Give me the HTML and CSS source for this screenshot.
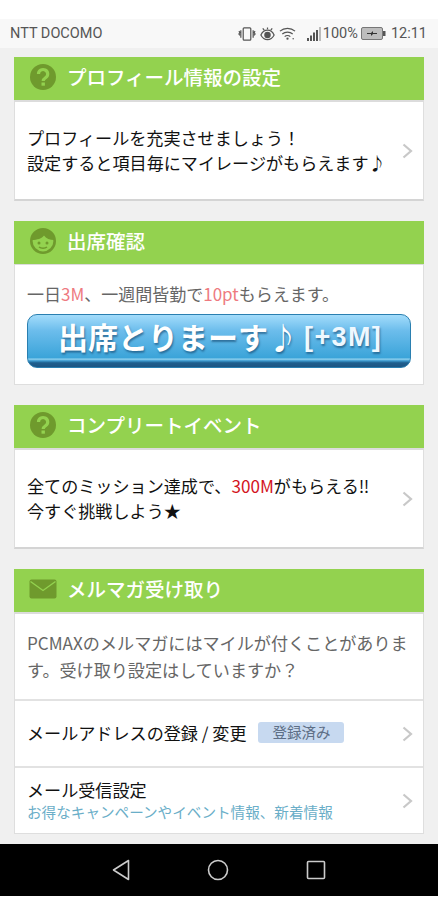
FILE: index.html
```html
<!DOCTYPE html>
<html lang="ja">
<head>
  <meta charset="UTF-8" />
  <meta name="viewport" content="width=device-width, initial-scale=1.0"/>
  <title>マイページ</title>
  <link rel="stylesheet" href="styles.css">
</head>
<body>
  <div class="screen">
    <div class="status-bar">
      <span class="carrier">NTT DOCOMO</span>
      <div class="status-right">
        <svg class="st-icon" width="18" height="16" viewBox="0 0 19 16" fill="none" stroke="#555" stroke-width="1.3">
          <rect x="5.500" y="1.500" width="8" height="13" rx="1"/>
          <path d="M3 4v8M1 5l1 1.500-1 1.500 1 1.500M16 4v8M18 5l-1 1.500 1 1.500-1 1.500"/>
        </svg>
        <svg class="st-icon" width="17" height="16" viewBox="0 0 18 16" fill="none" stroke="#555" stroke-width="1.3">
          <path d="M2 9c2-4 4-5 7-5s5 1 7 5c-2 4-4 5-7 5s-5-1-7-5z"/>
          <circle cx="9" cy="9" r="2.800" fill="#555"/>
          <path d="M9 1v2M4 2l1.500 2M14 2l-1.500 2"/>
        </svg>
        <svg class="st-icon" width="17" height="15" viewBox="0 0 18 15" fill="none" stroke="#555" stroke-width="1.3">
          <path d="M1 5c4.500-4 11.500-4 16 0M3.500 8c3-2.600 8-2.600 11 0M6 10.800c1.600-1.300 4.400-1.300 6 0"/>
          <circle cx="9" cy="13" r="1.200" fill="#555" stroke="none"/>
          <circle cx="15" cy="13" r="0.800" fill="#555" stroke="none"/>
        </svg>
        <svg class="st-icon signal" width="15" height="14" viewBox="0 0 15 14" fill="#555">
          <rect x="0" y="11" width="2" height="3"/>
          <rect x="3" y="8.500" width="2" height="5.500"/>
          <rect x="6" y="5.500" width="2" height="8.500"/>
          <rect x="9" y="3" width="2" height="11"/>
          <rect x="12" y="0" width="2" height="14" fill="#bbb"/>
        </svg>
        <span class="st-text">100%</span>
        <svg class="st-icon battery" width="25" height="13" viewBox="0 0 25 13">
          <rect x="0.500" y="0.500" width="21" height="12" rx="1.500" fill="#bdbdbd" stroke="#777"/>
          <rect x="22" y="4" width="2.500" height="5" fill="#555"/>
          <path d="M6 6h4l2-2v2h4v1h-4l-2 2V7H6z" fill="#333"/>
        </svg>
        <span class="st-text time">12:11</span>
      </div>
    </div>

    <div class="content">
      <div class="card card-shadow">
        <div class="card-head">
          <svg class="head-icon" width="28" height="28" viewBox="0 0 28 28">
            <circle cx="14" cy="14" r="13" fill="#6f9a2d"/>
            <path d="M9.500 11a4.600 4.400 0 1 1 7.300 3.500c-1.600 1.100-2.600 1.800-2.600 3.500" fill="none" stroke="#93d24f" stroke-width="3.200"/>
            <rect x="12.500" y="19.500" width="3.400" height="3.200" fill="#93d24f"/>
          </svg>
          <span>プロフィール情報の設定</span>
        </div>
        <a class="row row-tall" href="#">
          <div class="row-text">プロフィールを充実させましょう！<br>設定すると項目毎にマイレージがもらえます♪</div>
          <svg class="chevron" width="11" height="16" viewBox="0 0 11 16" fill="none" stroke="#c8c8c8" stroke-width="2.200"><path d="M1.500 1.500L9 8l-7.500 6.500"/></svg>
        </a>
      </div>

      <div class="card">
        <div class="card-head head-flat">
          <svg class="head-icon" width="28" height="28" viewBox="0 0 28 28" fill="none" stroke="#6f9a2d" stroke-width="2.600">
            <circle cx="14" cy="14" r="11.700"/>
            <path d="M3 13C3 6 8 2 14 2s11 4 11 11c-4 0-8-1.500-10-4.500C13 11.500 8 13 3 13z" fill="#6f9a2d" stroke="none"/>
            <circle cx="10" cy="16" r="1.500" fill="#6f9a2d" stroke="none"/>
            <circle cx="18" cy="16" r="1.500" fill="#6f9a2d" stroke="none"/>
            <path d="M10 20c2 1.600 6 1.600 8 0" stroke-width="1.600"/>
          </svg>
          <span>出席確認</span>
        </div>
        <div class="attend">
          <p class="attend-text">一日<span class="pink">3M</span>、一週間皆勤で<span class="pink">10pt</span>もらえます。</p>
          <a class="attend-btn" href="#">出席とりまーす♪<small>[+3M]</small></a>
        </div>
      </div>

      <div class="card card-shadow">
        <div class="card-head">
          <svg class="head-icon" width="28" height="28" viewBox="0 0 28 28">
            <circle cx="14" cy="14" r="13" fill="#6f9a2d"/>
            <path d="M9.500 11a4.600 4.400 0 1 1 7.300 3.500c-1.600 1.100-2.600 1.800-2.600 3.500" fill="none" stroke="#93d24f" stroke-width="3.200"/>
            <rect x="12.500" y="19.500" width="3.400" height="3.200" fill="#93d24f"/>
          </svg>
          <span>コンプリートイベント</span>
        </div>
        <a class="row row-tall" href="#">
          <div class="row-text">全てのミッション達成で、<span class="red">300M</span>がもらえる‼<br>今すぐ挑戦しよう★</div>
          <svg class="chevron" width="11" height="16" viewBox="0 0 11 16" fill="none" stroke="#c8c8c8" stroke-width="2.200"><path d="M1.500 1.500L9 8l-7.500 6.500"/></svg>
        </a>
      </div>

      <div class="card">
        <div class="card-head">
          <svg class="head-icon" width="28" height="20" viewBox="0 0 28 20">
            <rect x="0.500" y="0.500" width="27" height="19" rx="2" fill="#6f9a2d"/>
            <path d="M1.500 2.500L14 11.500l12.500-9" fill="none" stroke="#93d24f" stroke-width="1.400"/>
          </svg>
          <span>メルマガ受け取り</span>
        </div>
        <p class="mail-text">PCMAXのメルマガにはマイルが付くことがあります。受け取り設定はしていますか？</p>
        <a class="row row-mail" href="#">
          <div class="row-text row-inline">メールアドレスの登録 / 変更<span class="badge">登録済み</span></div>
          <svg class="chevron" width="11" height="16" viewBox="0 0 11 16" fill="none" stroke="#c8c8c8" stroke-width="2.200"><path d="M1.500 1.500L9 8l-7.500 6.500"/></svg>
        </a>
        <a class="row row-recv" href="#">
          <div class="recv-text">
            <div class="row-text">メール受信設定</div>
            <div class="row-sub">お得なキャンペーンやイベント情報、新着情報</div>
          </div>
          <svg class="chevron" width="11" height="16" viewBox="0 0 11 16" fill="none" stroke="#c8c8c8" stroke-width="2.200"><path d="M1.500 1.500L9 8l-7.500 6.500"/></svg>
        </a>
      </div>
    </div>

    <div class="nav-bar">
      <svg width="18" height="22" viewBox="0 0 18 22" fill="none" stroke="#ccc" stroke-width="1.600"><path d="M16.500 1.500v19L1.500 11z" stroke-linejoin="round"/></svg>
      <svg width="22" height="22" viewBox="0 0 22 22" fill="none" stroke="#ccc" stroke-width="1.600"><circle cx="11" cy="11" r="9.500"/></svg>
      <svg width="20" height="20" viewBox="0 0 20 20" fill="none" stroke="#ccc" stroke-width="1.600"><rect x="1.500" y="1.500" width="17" height="17" rx="1"/></svg>
    </div>
  </div>
</body>
</html>
```

FILE: styles.css
```css
* {
  box-sizing: border-box;
}

body {
  margin: 0;
  background-color: #fff;
  font-family: "Noto Sans CJK JP", "Noto Sans", sans-serif;
}

a {
  color: inherit;
  text-decoration: none;
}

.screen {
  width: 438px;
  height: 877px;
  margin-top: 19px;
  display: flex;
  flex-direction: column;
  overflow: hidden;
}

/* status bar */
.status-bar {
  height: 29px;
  flex-shrink: 0;
  background-color: #f8f8f8;
  padding: 0 11px 0 10px;
  display: flex;
  justify-content: space-between;
  align-items: center;
  color: #555;
  font-family: Roboto, sans-serif;
  font-size: 14.500px;
}

.status-right {
  display: flex;
  align-items: center;
  gap: 3px;
}

.signal {
  margin-left: 8px;
  margin-right: -2px;
}

.battery {
  margin-left: 0;
  margin-right: 2px;
}

/* main area */
.content {
  flex: 1;
  background-color: #f0f0f0;
  padding: 9px 14px 0;
  display: flex;
  flex-direction: column;
  gap: 20px;
  overflow: hidden;
}

.card {
  background-color: #fff;
  border: 1px solid #dedede;
  border-top: none;
  flex-shrink: 0;
}

.card-shadow {
  border-bottom: 2px solid #d4d4d4;
}

.card-head {
  height: 45px;
  margin: 0 -1px;
  background-color: #93d24f;
  border-bottom: 2px solid #dcdcdc;
  padding: 0 0 3px 15px;
  display: flex;
  align-items: center;
  gap: 10px;
  color: #fff;
  font-size: 19.500px;
  font-weight: 500;
  line-height: 1;
}

.head-flat {
  height: 44px;
  border-bottom: 1px solid #dcdcdc;
}

.head-icon {
  flex-shrink: 0;
}

.row {
  display: flex;
  justify-content: space-between;
  align-items: center;
  padding: 0 10px 0 12px;
  color: #111;
}

.row-tall {
  height: 97px;
}

.row-tall .row-text {
  margin-bottom: 2px;
}

.row-text {
  font-size: 17.100px;
  line-height: 25px;
}

.chevron {
  flex-shrink: 0;
}

.red {
  color: #d3141d;
}

.pink {
  color: #ee7a7f;
}

/* attendance */
.attend {
  padding: 17px 12px 16px;
}

.attend-text {
  margin: -1px 0 8px;
  color: #666;
  font-size: 17px;
  line-height: 25px;
}

.attend-btn {
  height: 54px;
  padding: 0 0 10px 30px;
  display: flex;
  align-items: center;
  border: 1px solid #2a7fb0;
  border-radius: 10px;
  background: linear-gradient(#a3dcfb 0%, #6cbdec 30%, #3ba4d9 82%, #8fd0ee 85%, #3d9bd0 88%, #1f5f8e 92%, #1d5583 100%);
  color: #fff;
  font-size: 30px;
  font-weight: 700;
  line-height: 1;
  white-space: nowrap;
  text-shadow: 1px 2px 2px rgba(20, 70, 110, 0.6);
}

.attend-btn small {
  margin: 3px 0 0 6px;
  font-family: "Liberation Sans", sans-serif;
  font-size: 27px;
  letter-spacing: 1.400px;
  color: #eef8ff;
}

/* mail card */
.mail-text {
  margin: 0;
  padding: 15px 12px 0;
  height: 85px;
  color: #666;
  font-size: 17.100px;
  line-height: 27px;
}

.row-mail {
  height: 67px;
  border-top: 2px solid #e2e2e2;
}

.row-recv {
  height: 67px;
  border-top: 2px solid #e2e2e2;
}

.row-inline {
  display: flex;
  align-items: center;
  margin-bottom: 2px;
}

.recv-text {
  margin-bottom: 2px;
}

.badge {
  margin-left: 12px;
  width: 86px;
  height: 21px;
  border-radius: 3px;
  background-color: #c7d9f0;
  color: #5e6f86;
  font-size: 14.500px;
  line-height: 19px;
  text-align: center;
}

.row-sub {
  color: #6aaec8;
  font-size: 14.600px;
  line-height: 20px;
}

/* android nav */
.nav-bar {
  height: 52px;
  flex-shrink: 0;
  background-color: #000;
  padding: 0 112px;
  display: flex;
  justify-content: space-between;
  align-items: center;
}
```
